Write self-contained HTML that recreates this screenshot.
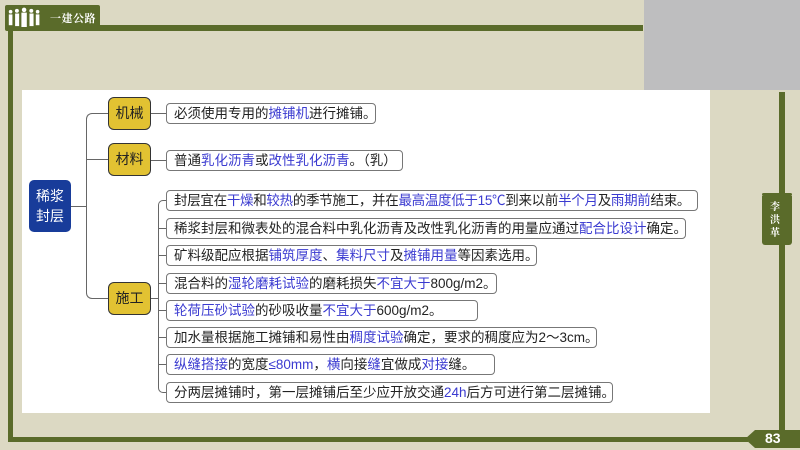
<!DOCTYPE html>
<html><head><meta charset="utf-8"><style>
*{margin:0;padding:0;box-sizing:border-box}
body{width:800px;height:450px;overflow:hidden;background:#dcd9c3;position:relative;font-family:"Liberation Sans","Noto Sans CJK SC",sans-serif}
.a{position:absolute}
.ol{background:#5a6b2a}
.leaf{position:absolute;left:166px;height:21px;border:1px solid #777;border-radius:4px;background:#fff;font-size:13.5px;line-height:19px;padding-left:7px;color:#222;white-space:nowrap}
.b{color:#3a3ad0}
.br{position:absolute;left:108px;width:43px;height:33px;background:#e2c232;border:1.5px solid #333;border-radius:6px;font-size:14px;line-height:30px;text-align:center;color:#222}
.ln{position:absolute;background:#666}
</style></head><body>
<div class="a" style="left:644px;top:0;width:156px;height:90px;background:#bebebf"></div>
<div class="a ol" style="left:96px;top:25px;width:547px;height:6px"></div>
<div class="a ol" style="left:8px;top:28px;width:5px;height:414px"></div>
<div class="a ol" style="left:8px;top:437px;width:740px;height:5px"></div>
<div class="a ol" style="left:779px;top:92px;width:6px;height:345px"></div>
<div class="a ol" style="left:5px;top:5px;width:95px;height:26px;border-radius:2px"></div>
<svg class="a" style="left:7px;top:6px" width="36" height="24" viewBox="0 0 40 24" fill="#fff">
<circle cx="4" cy="5" r="2"/><rect x="2" y="8" width="4" height="12"/>
<circle cx="11" cy="4" r="2.2"/><rect x="9" y="7" width="4.5" height="14"/>
<circle cx="19" cy="3" r="2.5"/><rect x="16" y="6" width="6" height="16"/>
<circle cx="27" cy="4" r="2.2"/><rect x="25" y="7" width="4.5" height="14"/>
<circle cx="34" cy="5" r="2"/><rect x="32" y="8" width="4" height="12"/>
</svg>
<div class="a" style="left:50px;top:10px;font-size:11px;letter-spacing:0.5px;color:#fff;font-weight:bold;font-family:'Noto Serif CJK SC',serif">一建公路</div>
<div class="a" style="left:22px;top:90px;width:688px;height:323px;background:#fff"></div>
<div class="a ol" style="left:762px;top:193px;width:30px;height:3px;border-radius:2px"></div>
<div class="a ol" style="left:762px;top:196px;width:30px;height:49px;border-radius:0 0 3px 3px"></div>
<div class="a" style="left:770px;top:199px;width:14px;font-size:10px;line-height:13px;color:#fff;font-weight:bold;font-family:'Noto Serif CJK SC',serif">李洪革</div>
<div class="a ol" style="left:745px;top:430px;width:55px;height:18px;border-radius:9px 0 0 9px;clip-path:polygon(10px 0,100% 0,100% 100%,10px 100%,0 50%)"></div>
<div class="a" style="left:765px;top:430px;font-size:14px;font-weight:bold;color:#fff">83</div>

<div class="ln" style="left:70px;top:206px;width:16px;height:1px"></div>
<div class="a" style="left:86px;top:113px;width:22px;height:186px;border:1px solid #666;border-right:none;border-radius:6px 0 0 6px"></div>
<div class="ln" style="left:86px;top:159px;width:22px;height:1px"></div>
<div class="ln" style="left:151px;top:113px;width:15px;height:1px"></div>
<div class="ln" style="left:151px;top:160px;width:15px;height:1px"></div>
<div class="ln" style="left:151px;top:298px;width:8px;height:1px"></div>
<div class="a" style="left:158px;top:200px;width:8px;height:193px;border:1px solid #666;border-right:none;border-radius:5px 0 0 5px"></div>
<div class="ln" style="left:158px;top:228px;width:8px;height:1px"></div>
<div class="ln" style="left:158px;top:255px;width:8px;height:1px"></div>
<div class="ln" style="left:158px;top:283px;width:8px;height:1px"></div>
<div class="ln" style="left:158px;top:310px;width:8px;height:1px"></div>
<div class="ln" style="left:158px;top:337px;width:8px;height:1px"></div>
<div class="ln" style="left:158px;top:364px;width:8px;height:1px"></div>

<div class="a" style="left:29px;top:180px;width:42px;height:52px;background:#183c9a;border-radius:5px;color:#fff;font-size:14px;line-height:20px;text-align:center;padding-top:6px">稀浆<br>封层</div>
<div class="br" style="top:97px">机械</div>
<div class="br" style="top:143px">材料</div>
<div class="br" style="top:282px">施工</div>

<div class="leaf" style="top:103px;width:210px">必须使用专用的<span class="b">摊铺机</span>进行摊铺。</div>
<div class="leaf" style="top:150px;width:237px">普通<span class="b">乳化沥青</span>或<span class="b">改性乳化沥青</span>。（乳）</div>
<div class="leaf" style="top:190px;width:532px;letter-spacing:-0.3px">封层宜在<span class="b">干燥</span>和<span class="b">较热</span>的季节施工，并在<span class="b">最高温度低于15℃</span>到来以前<span class="b">半个月</span>及<span class="b">雨期前</span>结束。</div>
<div class="leaf" style="top:218px;width:520px">稀浆封层和微表处的混合料中乳化沥青及改性乳化沥青的用量应通过<span class="b">配合比设计</span>确定。</div>
<div class="leaf" style="top:245px;width:371px">矿料级配应根据<span class="b">铺筑厚度</span>、<span class="b">集料尺寸</span>及<span class="b">摊铺用量</span>等因素选用。</div>
<div class="leaf" style="top:273px;width:331px">混合料的<span class="b">湿轮磨耗试验</span>的磨耗损失<span class="b">不宜大于</span>800g/m2。</div>
<div class="leaf" style="top:300px;width:312px"><span class="b">轮荷压砂试验</span>的砂吸收量<span class="b">不宜大于</span>600g/m2。</div>
<div class="leaf" style="top:327px;width:431px">加水量根据施工摊铺和易性由<span class="b">稠度试验</span>确定，要求的稠度应为2～3cm。</div>
<div class="leaf" style="top:354px;width:329px"><span class="b">纵缝搭接</span>的宽度<span class="b">≤80mm</span>，<span class="b">横</span>向接<span class="b">缝</span>宜做成<span class="b">对接</span>缝。</div>
<div class="leaf" style="top:382px;width:447px">分两层摊铺时，第一层摊铺后至少应开放交通<span class="b">24h</span>后方可进行第二层摊铺。</div>
</body></html>
